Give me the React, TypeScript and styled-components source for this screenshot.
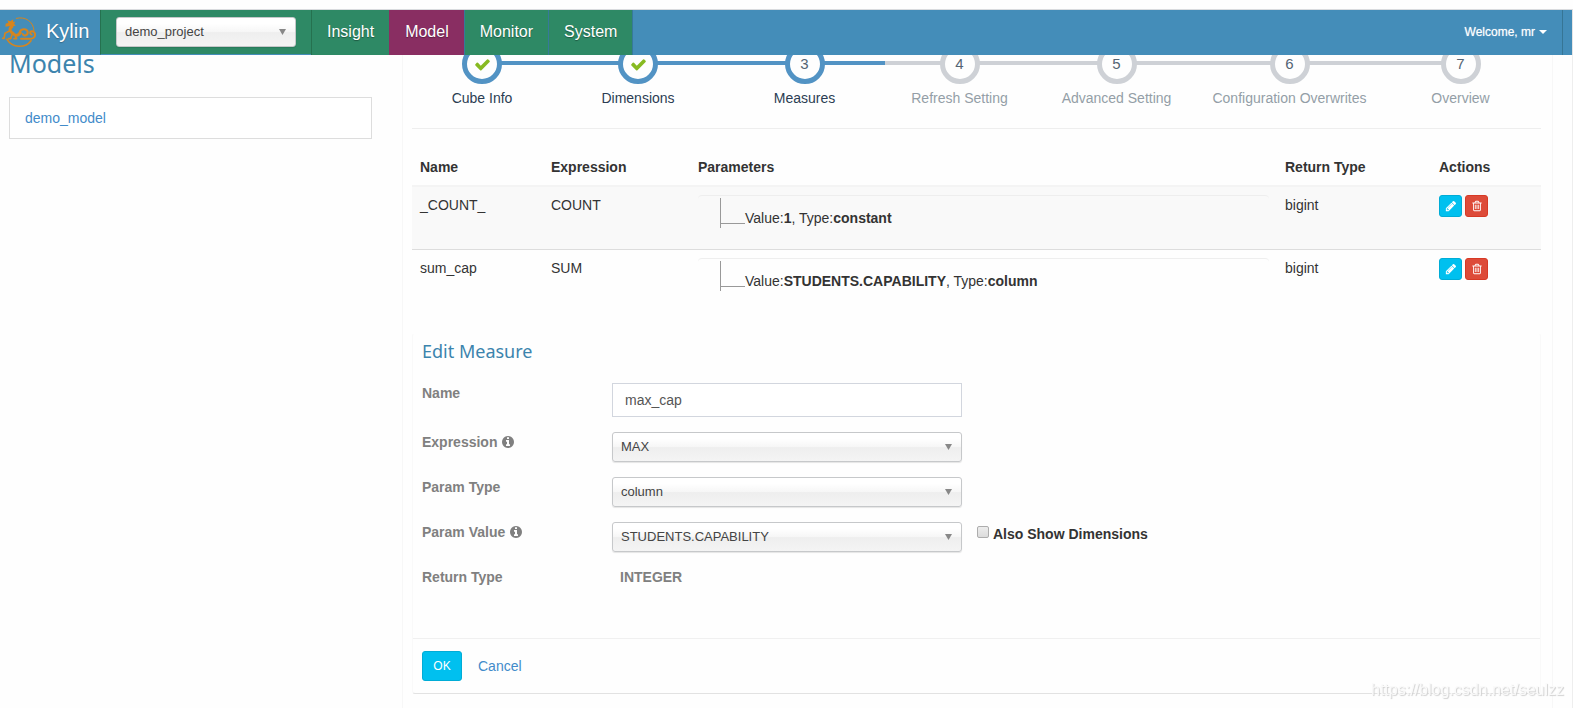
import React from "react";
import styled, { createGlobalStyle } from "styled-components";

const GlobalStyle = createGlobalStyle`
  *, *::before, *::after { box-sizing: border-box; }
  body {
    margin: 0;
    background: #fefefe;
    color: #333;
    font-family: "Liberation Sans", Arial, sans-serif;
    font-size: 14px;
    line-height: 20px;
  }
`;

const Header = styled.header`
  position: fixed;
  top: 9px;
  left: 0;
  right: 0;
  z-index: 10;
  display: flex;
  height: 46px;
  border-top: 1px solid #d9dbde;
  border-right: 1px solid #e4e4e4;
  background: #448db9;
`;

const TopStrip = styled.div`
  position: fixed;
  top: 0;
  left: 0;
  right: 0;
  z-index: 10;
  height: 9px;
  background: #fefefe;
`;

const Brand = styled.a`
  display: flex;
  align-items: center;
  gap: 9px;
  width: 100px;
  padding: 0 0 3px 1px;
  color: #fff;
  font-size: 20px;
  text-decoration: none;
  text-shadow: 0 1px 1px rgba(0, 0, 0, 0.25);
`;

const ProjectSlot = styled.div`
  width: 211px;
  padding: 7px 15px;
  border-left: 1px solid #25714f;
  border-bottom: 1px solid #448db9;
  background: #2e8965;
`;

const NavLink = styled.a<{ $active?: boolean }>`
  padding: 0 15px;
  border-left: 1px solid ${(p) => (p.$active ? "#892e62" : "#36799a")};
  background: ${(p) => (p.$active ? "#892e62" : "#2e8965")};
  color: #fff;
  font-size: 16px;
  line-height: 43px;
  text-decoration: none;
  text-shadow: 0 1px 1px rgba(0, 0, 0, 0.35);
  &:first-child { border-left-color: #25714f; }
`;

const Nav = styled.nav`
  display: flex;
  border-right: 1px solid #36799a;
`;

const UserMenu = styled.button`
  display: flex;
  align-items: center;
  gap: 4px;
  margin-left: auto;
  padding: 0 15px 2px;
  border: 0;
  border-right: 1px solid #367595;
  background: none;
  color: #fff;
  font: 12px "Liberation Sans", Arial, sans-serif;
  text-shadow: 0 0 1px rgba(255, 255, 255, 0.6);
`;

const UserTail = styled.div`
  width: 9px;
`;

const SelectBox = styled.div`
  position: relative;
  svg {
    position: absolute;
    top: 12px;
    right: 10px;
    pointer-events: none;
  }
`;

const SelectControl = styled.select`
  display: block;
  width: 100%;
  height: 30px;
  padding: 0 24px 1px 8px;
  appearance: none;
  border: 1px solid #c6c8ca;
  border-radius: 3px;
  background: linear-gradient(#fff 20%, #f6f6f6 50%, #eee 52%, #f4f4f4 100%);
  box-shadow: 0 1px 1px rgba(0, 0, 0, 0.1);
  color: #444;
  font: 13px "Liberation Sans", Arial, sans-serif;
`;

const Page = styled.main`
  display: grid;
  grid-template-columns: minmax(240px, 402fr) 1151fr 19px;
  min-height: 100vh;
  padding-top: 44px;
  border-right: 1px solid #eee;
`;

const Sidebar = styled.aside`
  padding: 0 30px 0 9px;
`;

const SideTitle = styled.h3`
  margin: 4px 0 18px;
  color: #3c84ad;
  font: 400 25px/31px "Noto Sans", sans-serif;
`;

const ModelItem = styled.a`
  display: block;
  padding: 10px 15px;
  border: 1px solid #ddd;
  background: #fff;
  color: #428bca;
  text-decoration: none;
`;

const Content = styled.section`
  padding: 0 11px 15px 9px;
  border-left: 1px solid #f7f7f7;
  border-right: 1px solid #f7f7f7;
`;

const Steps = styled.ol`
  display: flex;
  height: 85px;
  margin: 0;
  padding: 0;
  border-bottom: 1px solid #eee;
  list-style: none;
`;

const Step = styled.li<{ $grow: number; $reached?: boolean; $edge?: "first" | "last" }>`
  display: flex;
  flex: ${(p) => p.$grow} 1 0;
  flex-direction: column;
  align-items: center;
  color: ${(p) => (p.$reached ? "#2b3d53" : "#949ea7")};
  background: linear-gradient(
      ${(p) => (p.$reached ? "#5293c4, #5293c4" : "#ced1d6, #ced1d6")}
    )
    no-repeat ${(p) => (p.$edge === "first" ? "right" : "left")} 17px /
    ${(p) => (p.$edge ? "50%" : "100%")} 4px;
`;

const StepCircle = styled.span<{ $reached?: boolean }>`
  display: flex;
  align-items: center;
  justify-content: center;
  width: 40px;
  height: 40px;
  margin-bottom: 4px;
  border: 5px solid ${(p) => (p.$reached ? "#5293c4" : "#ced1d6")};
  border-radius: 50%;
  background: #fefefe;
  color: #546474;
  font-size: 15px;
`;

const MeasureTable = styled.table`
  width: 100%;
  table-layout: fixed;
  border-collapse: collapse;
  margin: 20px 0;
`;

const HeadCell = styled.th<{ $width?: number }>`
  width: ${(p) => (p.$width ? `${p.$width}px` : "auto")};
  padding: 8px;
  border-bottom: 2px solid #f4f4f4;
  text-align: left;
`;

const Row = styled.tr<{ $striped?: boolean }>`
  height: 63px;
  background: ${(p) => (p.$striped ? "#f9f9f9" : "transparent")};
  border-bottom: ${(p) => (p.$striped ? "1px solid #ddd" : "0")};
`;

const Cell = styled.td`
  padding: 8px;
  vertical-align: top;
`;

const ParamBox = styled.div`
  display: flex;
  height: 46px;
  padding: 2px 22px 0;
  border-top: 1px solid #eee;
  border-radius: 4px;
`;

const Branch = styled.span`
  width: 25px;
  height: 30px;
  border-left: 1px solid #999;
  &::before {
    content: "";
    display: block;
    height: 26px;
    border-bottom: 1px solid #999;
  }
`;

const ParamText = styled.span`
  padding-top: 10px;
`;

const Actions = styled.div`
  display: flex;
  gap: 3px;
`;

const IconButton = styled.button<{ $danger?: boolean }>`
  display: flex;
  align-items: center;
  justify-content: center;
  width: 23px;
  height: 22px;
  padding: 0;
  border: 1px solid ${(p) => (p.$danger ? "#d73925" : "#00acd6")};
  border-radius: 3px;
  background: ${(p) => (p.$danger ? "#dd4b39" : "#00c0ef")};
  color: #fff;
`;

const EditCard = styled.form`
  border: 1px solid #f9f9f9;
  border-top-color: transparent;
  border-bottom-color: #e2e2e2;
  border-radius: 3px;
`;

const CardBody = styled.div`
  padding: 3px 9px 51px;
`;

const CardTitle = styled.h4`
  margin: 0 0 18px;
  color: #3c84ad;
  font: 400 18px/28px "Noto Sans", sans-serif;
`;

const FormRow = styled.div`
  display: grid;
  grid-template-columns: 190fr 350fr 569fr;
  & + & { margin-top: 15px; }
`;

const FieldLabel = styled.label`
  color: #808080;
  font-weight: bold;
  svg { vertical-align: -2px; }
`;

const TextInput = styled.input`
  width: 100%;
  height: 34px;
  padding: 0 12px;
  border: 1px solid #d2d6de;
  background: #fff;
  color: #555;
  font: 14px "Liberation Sans", Arial, sans-serif;
`;

const ReadOnlyValue = styled.output`
  padding-left: 8px;
  color: #808080;
  font-weight: bold;
`;

const CheckLabel = styled.label`
  display: flex;
  align-items: flex-start;
  gap: 4px;
  padding: 2px 0 0 15px;
  font-weight: bold;
`;

const CheckInput = styled.input`
  width: 12px;
  height: 12px;
  margin: 2px 0 0;
  appearance: none;
  border: 1px solid #adadad;
  border-radius: 2px;
  background: linear-gradient(#ededed, #dcdcdc);
  &:checked { background: #428bca; }
`;

const CardFooter = styled.div`
  display: flex;
  align-items: center;
  gap: 16px;
  padding: 12px 9px;
  border-top: 1px solid #f0f0f0;
`;

const OkButton = styled.button`
  width: 40px;
  height: 30px;
  padding: 0;
  border: 1px solid #00acd6;
  border-radius: 3px;
  background: #00c0ef;
  color: #fff;
  font: 12px "Liberation Sans", Arial, sans-serif;
`;

const CancelLink = styled.a`
  color: #428bca;
  text-decoration: none;
`;

const Watermark = styled.span`
  position: fixed;
  right: 9px;
  bottom: 8px;
  color: #fafafa;
  font-size: 16px;
  text-shadow: 1px 1px 1px #d0d0d0;
`;

const ICONS = {
  pencil:
    "M491 1536l91-91-235-235-91 91v107h128v128h107zm523-928q0-22-22-22-10 0-17 7l-542 542q-7 7-7 17 0 22 22 22 10 0 17-7l542-542q7-7 7-17zm-54-192l416 416-832 832h-416v-416l832-832zm683 96q0 53-37 90l-166 166-416-416 166-165q36-38 90-38 53 0 91 38l235 234q37 39 37 91z",
  trash:
    "M704 736v576q0 14-9 23t-23 9h-64q-14 0-23-9t-9-23v-576q0-14 9-23t23-9h64q14 0 23 9t9 23zm256 0v576q0 14-9 23t-23 9h-64q-14 0-23-9t-9-23v-576q0-14 9-23t23-9h64q14 0 23 9t9 23zm256 0v576q0 14-9 23t-23 9h-64q-14 0-23-9t-9-23v-576q0-14 9-23t23-9h64q14 0 23 9t9 23zm128 724v-948h-896v948q0 22 7 40.5t14.5 27 10.5 8.5h832q3 0 10.5-8.5t14.5-27 7-40.5zm-672-1076h448l-48-117q-7-9-17-11h-317q-10 2-17 11zm928 32v64q0 14-9 23t-23 9h-96v948q0 83-47 143.5t-113 60.5h-832q-66 0-113-58.5t-47-141.5v-952h-96q-14 0-23-9t-9-23v-64q0-14 9-23t23-9h309l70-167q15-37 54-63t79-26h320q40 0 79 26t54 63l70 167h309q14 0 23 9t9 23z",
  check:
    "M1671 566q0 40-28 68l-724 724-136 136q-28 28-68 28t-68-28l-136-136-362-362q-28-28-28-68t28-68l136-136q28-28 68-28t68 28l294 295 656-657q28-28 68-28t68 28l136 136q28 28 28 68z",
  info:
    "M1152 1376v-160q0-14-9-23t-23-9h-96v-512q0-14-9-23t-23-9h-320q-14 0-23 9t-9 23v160q0 14 9 23t23 9h96v320h-96q-14 0-23 9t-9 23v160q0 14 9 23t23 9h448q14 0 23-9t9-23zm-128-896v-160q0-14-9-23t-23-9h-192q-14 0-23 9t-9 23v160q0 14 9 23t23 9h192q14 0 23-9t9-23zm640 416q0 209-103 385.5t-279.5 279.5-385.5 103-385.5-103-279.5-279.5-103-385.5 103-385.5 279.5-279.5 385.5-103 385.5 103 279.5 279.5 103 385.5z",
};

function Icon({ name, size, color = "currentColor" }: { name: keyof typeof ICONS; size: number; color?: string }) {
  return (
    <svg width={size} height={size} viewBox="0 0 1792 1792" fill={color} aria-hidden="true">
      <path d={ICONS[name]} />
    </svg>
  );
}

function DragonLogo() {
  return (
    <svg
      width="36"
      height="34"
      viewBox="0 0 108 102"
      fill="none"
      stroke="#d5851f"
      strokeLinecap="round"
      strokeLinejoin="round"
      aria-hidden="true"
    >
      {/* ring */}
      <path d="M46 13C74 6 98 24 99 50" strokeWidth="3" />
      <path d="M18 76C34 102 72 104 90 80" strokeWidth="5" />
      {/* head with horns */}
      <path
        d="M13 38L14 29L22 26L19 19L28 22L37 16L36 23L43 23L39 29L44 35L37 37L36 43L26 42L27 36Z"
        fill="#d5851f"
        stroke="none"
      />
      {/* neck, legs and body */}
      <path d="M31 38C22 48 30 54 38 60C46 68 54 62 58 56" strokeWidth="9" />
      <path d="M24 52L12 58L9 73H5" strokeWidth="5" />
      <path d="M33 62L29 74H23M42 64L47 74H39" strokeWidth="5" />
      {/* tail */}
      <path d="M56 56C58 44 76 42 80 53C82 64 68 68 65 60" strokeWidth="6" />
      <path d="M60 74H90C106 72 106 52 92 52C86 52 86 60 92 62" strokeWidth="6" />
    </svg>
  );
}

function Select({ id, label, options }: { id: string; label?: string; options: string[] }) {
  return (
    <SelectBox>
      <SelectControl id={id} aria-label={label}>
        {options.map((o) => (
          <option key={o}>{o}</option>
        ))}
      </SelectControl>
      <svg width="7" height="6" viewBox="0 0 7 6" aria-hidden="true">
        <path d="M0 0h7L3.5 6z" fill="#888" />
      </svg>
    </SelectBox>
  );
}

const steps = [
  { title: "Cube Info", grow: 140, reached: true, done: true },
  { title: "Dimensions", grow: 172, reached: true, done: true },
  { title: "Measures", grow: 161, reached: true },
  { title: "Refresh Setting", grow: 149 },
  { title: "Advanced Setting", grow: 165 },
  { title: "Configuration Overwrites", grow: 181 },
  { title: "Overview", grow: 161 },
];

const measures = [
  { name: "_COUNT_", expression: "COUNT", value: "1", type: "constant", returns: "bigint" },
  { name: "sum_cap", expression: "SUM", value: "STUDENTS.CAPABILITY", type: "column", returns: "bigint" },
];

export default function App() {
  return (
    <>
      <GlobalStyle />
      <TopStrip />
      <Header>
        <Brand href="#">
          <DragonLogo />
          Kylin
        </Brand>
        <ProjectSlot>
          <Select id="project" label="Project" options={["demo_project"]} />
        </ProjectSlot>
        <Nav>
          <NavLink href="#insight">Insight</NavLink>
          <NavLink href="#model" $active>Model</NavLink>
          <NavLink href="#monitor">Monitor</NavLink>
          <NavLink href="#system">System</NavLink>
        </Nav>
        <UserMenu type="button">
          Welcome, mr
          <svg width="8" height="4" viewBox="0 0 8 4" aria-hidden="true">
            <path d="M0 0h8L4 4z" fill="#fff" />
          </svg>
        </UserMenu>
        <UserTail />
      </Header>
      <Page>
        <Sidebar>
          <SideTitle>Models</SideTitle>
          <ModelItem href="#demo_model">demo_model</ModelItem>
        </Sidebar>
        <Content>
          <Steps>
            {steps.map((s, i) => (
              <Step
                key={s.title}
                $grow={s.grow}
                $reached={s.reached}
                $edge={i === 0 ? "first" : i === steps.length - 1 ? "last" : undefined}
              >
                <StepCircle $reached={s.reached}>
                  {s.done ? <Icon name="check" size={17} color="#87ba21" /> : i + 1}
                </StepCircle>
                {s.title}
              </Step>
            ))}
          </Steps>
          <MeasureTable>
            <thead>
              <tr>
                <HeadCell $width={131}>Name</HeadCell>
                <HeadCell $width={147}>Expression</HeadCell>
                <HeadCell>Parameters</HeadCell>
                <HeadCell $width={154}>Return Type</HeadCell>
                <HeadCell $width={110}>Actions</HeadCell>
              </tr>
            </thead>
            <tbody>
              {measures.map((m, i) => (
                <Row key={m.name} $striped={i % 2 === 0}>
                  <Cell>{m.name}</Cell>
                  <Cell>{m.expression}</Cell>
                  <Cell>
                    <ParamBox>
                      <Branch />
                      <ParamText>
                        Value:<b>{m.value}</b>, Type:<b>{m.type}</b>
                      </ParamText>
                    </ParamBox>
                  </Cell>
                  <Cell>{m.returns}</Cell>
                  <Cell>
                    <Actions>
                      <IconButton type="button" aria-label={`Edit ${m.name}`}>
                        <Icon name="pencil" size={12} />
                      </IconButton>
                      <IconButton type="button" $danger aria-label={`Delete ${m.name}`}>
                        <Icon name="trash" size={12} />
                      </IconButton>
                    </Actions>
                  </Cell>
                </Row>
              ))}
            </tbody>
          </MeasureTable>
          <EditCard onSubmit={(e) => e.preventDefault()}>
            <CardBody>
              <CardTitle>Edit Measure</CardTitle>
              <FormRow>
                <FieldLabel htmlFor="name">Name</FieldLabel>
                <TextInput id="name" type="text" defaultValue="max_cap" />
              </FormRow>
              <FormRow>
                <FieldLabel htmlFor="expression">
                  Expression <Icon name="info" size={14} />
                </FieldLabel>
                <Select id="expression" options={["MAX"]} />
              </FormRow>
              <FormRow>
                <FieldLabel htmlFor="param-type">Param Type</FieldLabel>
                <Select id="param-type" options={["column"]} />
              </FormRow>
              <FormRow>
                <FieldLabel htmlFor="param-value">
                  Param Value <Icon name="info" size={14} />
                </FieldLabel>
                <Select id="param-value" options={["STUDENTS.CAPABILITY"]} />
                <CheckLabel>
                  <CheckInput type="checkbox" />
                  Also Show Dimensions
                </CheckLabel>
              </FormRow>
              <FormRow>
                <FieldLabel htmlFor="return-type">Return Type</FieldLabel>
                <ReadOnlyValue id="return-type">INTEGER</ReadOnlyValue>
              </FormRow>
            </CardBody>
            <CardFooter>
              <OkButton type="submit">OK</OkButton>
              <CancelLink href="#cancel">Cancel</CancelLink>
            </CardFooter>
          </EditCard>
        </Content>
      </Page>
      <Watermark>https://blog.csdn.net/seulzz</Watermark>
    </>
  );
}
